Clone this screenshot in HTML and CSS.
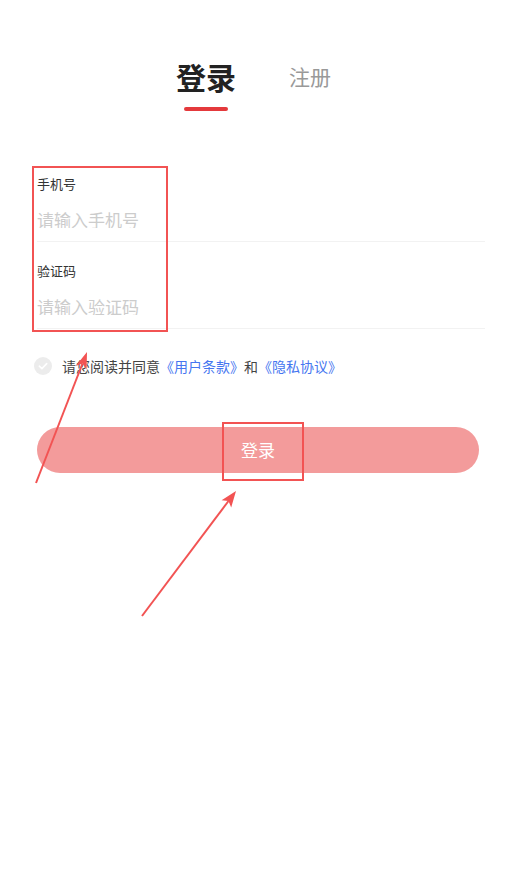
FILE: index.html
```html
<!DOCTYPE html>
<html lang="zh-CN">
<head>
<meta charset="utf-8">
<title>登录</title>
<link rel="stylesheet" href="styles.css">
</head>
<body>
<main class="page">
  <nav class="tabs">
    <div class="tab tab-active">
      <span class="tab-text">登录</span>
      <span class="tab-bar"></span>
    </div>
    <div class="tab">
      <span class="tab-text">注册</span>
    </div>
  </nav>

  <form class="form">
    <div class="field">
      <label class="field-label">手机号</label>
      <input class="field-input" type="text" placeholder="请输入手机号">
    </div>
    <div class="field">
      <label class="field-label">验证码</label>
      <input class="field-input" type="text" placeholder="请输入验证码">
    </div>
  </form>

  <div class="agree">
    <span class="check">
      <svg width="18" height="18" viewBox="0 0 18 18"><circle cx="9" cy="9" r="9" fill="#ececec"/><path d="M5.3 9.2 L7.9 11.6 L12.7 6.6" fill="none" stroke="#fff" stroke-width="1.6" stroke-linecap="round" stroke-linejoin="round"/></svg>
    </span>
    <span class="agree-text">请您阅读并同意<a class="link">《用户条款》</a>和<a class="link">《隐私协议》</a></span>
  </div>

  <button class="submit" type="button">登录</button>

  <svg class="annotations" width="516" height="894" viewBox="0 0 516 894">
    <rect x="33" y="167" width="134" height="164" fill="none" stroke="#f25353" stroke-width="2"/>
    <rect x="223" y="423" width="80" height="57" fill="none" stroke="#f25353" stroke-width="2"/>
    <line x1="36" y1="483" x2="82.5" y2="363.5" stroke="#f25353" stroke-width="2"/>
    <polygon points="87,352 86.6,369.5 82.5,363.5 75.7,366" fill="#f25353"/>
    <line x1="142" y1="616" x2="228.5" y2="501" stroke="#f25353" stroke-width="2"/>
    <polygon points="236,491 231.2,507.6 228.5,501 221.6,500.3" fill="#f25353"/>
  </svg>
</main>
</body>
</html>
```

FILE: styles.css
```css
* { box-sizing: border-box; }

html, body {
  margin: 0;
  padding: 0;
  background: #ffffff;
}

body {
  font-family: "Noto Sans CJK SC", "Noto Sans", sans-serif;
  color: #333333;
}

.page {
  position: relative;
  width: 516px;
  min-height: 894px;
  overflow: hidden;
}

.tabs {
  display: flex;
  justify-content: center;
  align-items: flex-start;
  gap: 53px;
  padding-top: 60px;
  padding-right: 9px;
}

.tab {
  display: flex;
  flex-direction: column;
  align-items: center;
}

.tab-text {
  font-size: 21px;
  line-height: 32px;
  color: #999999;
}

.tab-active .tab-text {
  font-size: 30px;
  font-weight: 700;
  color: #222222;
}

.tab-bar {
  display: block;
  width: 44px;
  height: 4px;
  margin-top: 15px;
  border-radius: 2px;
  background: #e4393c;
}

.form {
  margin: 44px 31px 0 37px;
}

.field {
  display: flex;
  flex-direction: column;
  padding: 22px 0 13px;
  border-bottom: 1px solid #f2f2f2;
}

.field-label {
  font-size: 13px;
  line-height: 13px;
  color: #333333;
}

.field-input {
  margin-top: 21px;
  height: 17px;
  padding: 0;
  border: none;
  outline: none;
  font: inherit;
  font-size: 17px;
  line-height: 17px;
  color: #333333;
  background: transparent;
}

.field-input::placeholder {
  color: #cccccc;
}

.agree {
  display: flex;
  align-items: center;
  gap: 10px;
  margin: 28px 0 0 34px;
  height: 18px;
}

.check {
  display: flex;
  width: 18px;
  height: 18px;
}

.agree-text {
  font-size: 14px;
  line-height: 18px;
  color: #444444;
}

.link {
  color: #4676f0;
  text-decoration: none;
}

.submit {
  display: block;
  width: 442px;
  height: 46px;
  margin: 52px 0 0 37px;
  border: none;
  border-radius: 23px;
  background: #f39b9b;
  color: #ffffff;
  font: inherit;
  font-size: 17px;
  line-height: 46px;
  padding: 0;
}

.annotations {
  position: absolute;
  left: 0;
  top: 0;
  pointer-events: none;
}
```
